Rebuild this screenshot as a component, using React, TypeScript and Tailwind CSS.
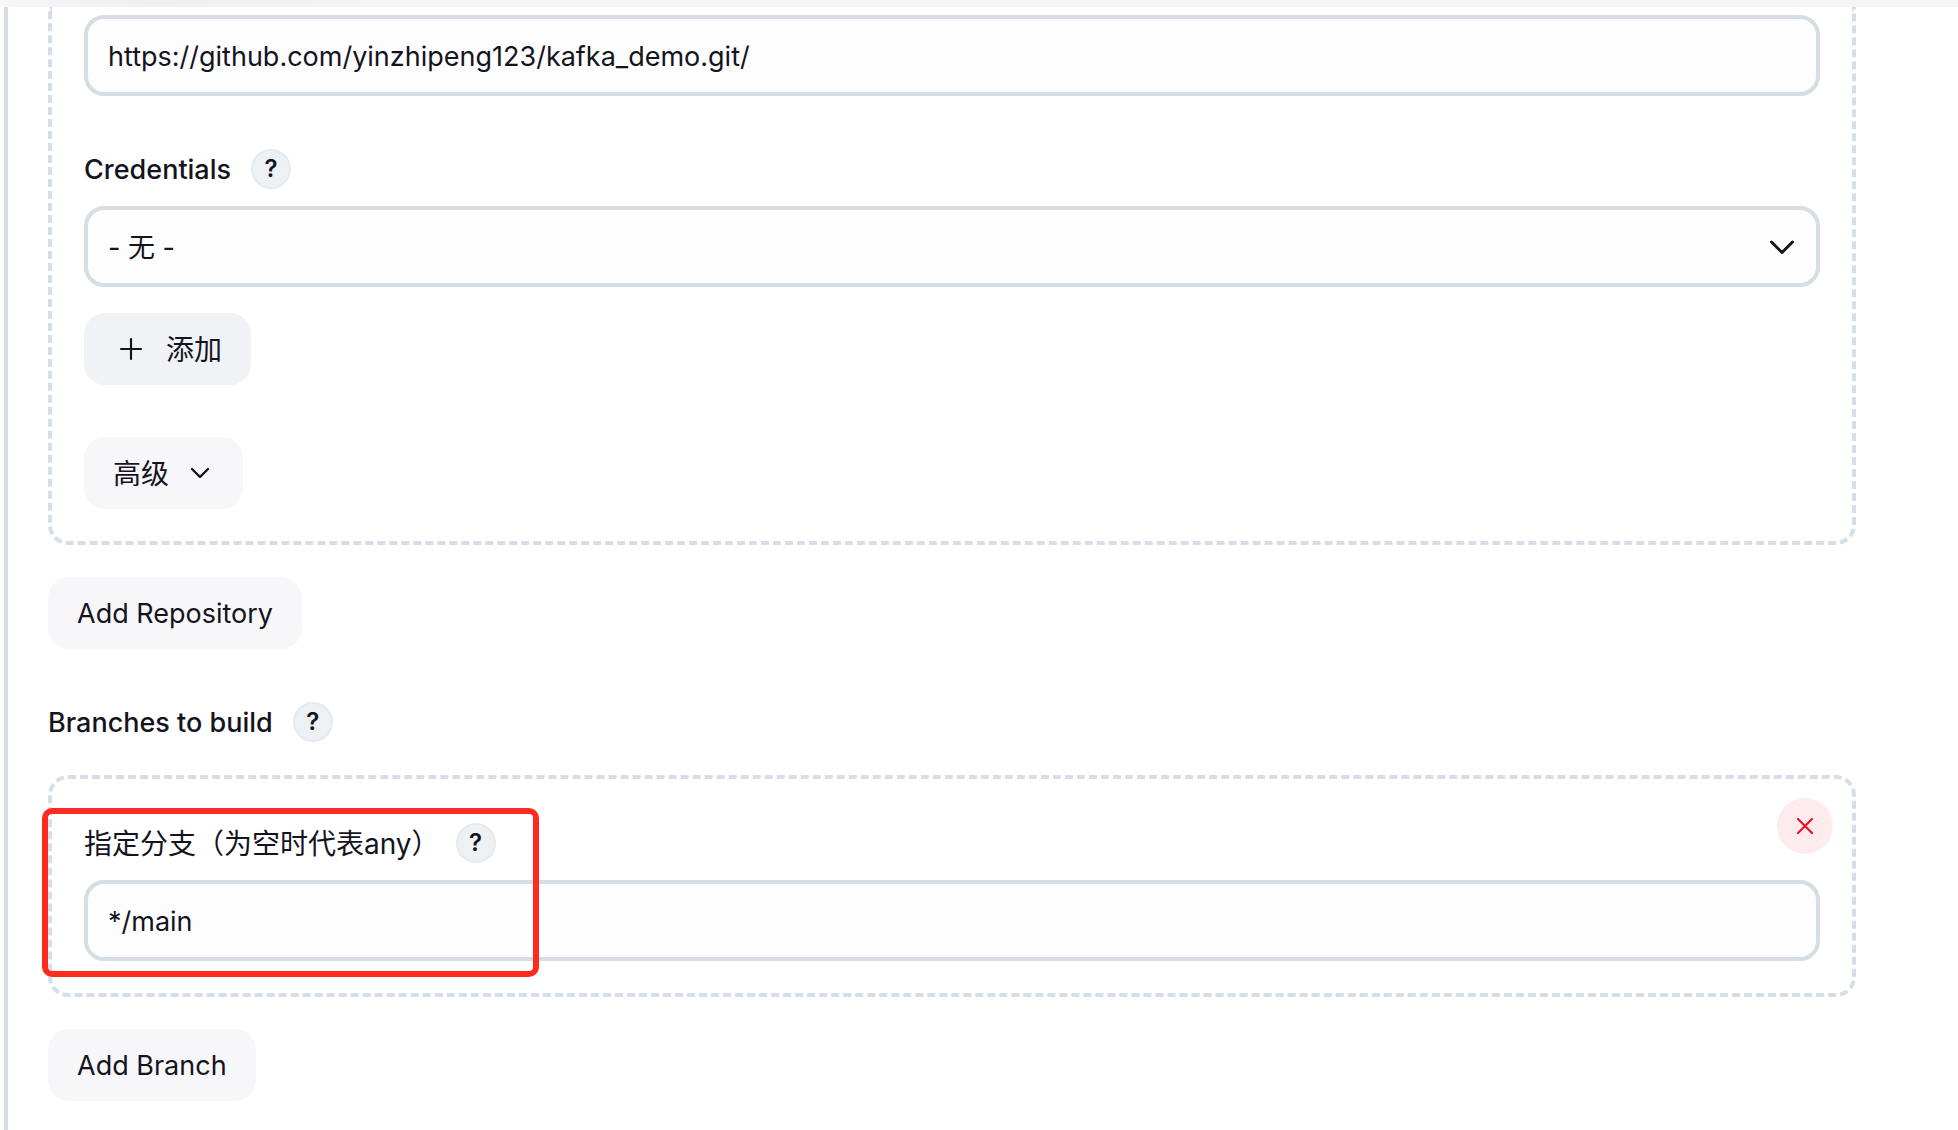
import React, { useState } from 'react';

const buttonBase =
  'flex h-[72px] items-center rounded-[21px] px-[29px] pt-0.5 transition-colors hover:bg-[#ebecf1]';

const fieldBase =
  'block h-[81px] w-full rounded-[20px] border-4 border-[#d6dde5] bg-[#fdfdfd] px-5 pt-0.5 outline-none focus:border-[#9fb4cc]';

const labelBase = 'pt-0.5 leading-[38px]';

function HelpButton({ topic }: { topic: string }) {
  return (
    <button
      type="button"
      aria-label={`Help for ${topic}`}
      className="flex h-10 w-10 items-center justify-center rounded-full border-2 border-[#e6ebf0] bg-[#edf1f4] text-[24px] leading-none font-semibold"
    >
      ?
    </button>
  );
}

export default function App() {
  const [url, setUrl] = useState('https://github.com/yinzhipeng123/kafka_demo.git/');
  const [credentials, setCredentials] = useState('none');
  const [branch, setBranch] = useState('*/main');

  return (
    <div className="flex min-h-screen flex-col bg-white font-[Inter,'Noto_Sans_CJK_SC',sans-serif] text-[27px] leading-10 text-[#14141f]">
      <header className="h-[7px] bg-linear-to-r from-[#f7f7fa] via-[#efeff2] via-8% to-[#f5f5f8] to-20%" />

      <main className="ml-1 flex-1 border-l-4 border-[#d6dde5] pr-[102px] pb-7 pl-10">
        <section className="rounded-b-[20px] border-4 border-t-0 border-dashed border-[#d6dfe7] px-8 pt-2 pb-8">
          <input
            type="text"
            aria-label="Repository URL"
            value={url}
            onChange={(e) => setUrl(e.target.value)}
            className={fieldBase}
          />

          <div className="mt-[53px] flex items-center gap-5">
            <label htmlFor="credentials" className={`${labelBase} font-[450]`}>Credentials</label>
            <HelpButton topic="Credentials" />
          </div>
          <div className="relative mt-[17px]">
            <select
              id="credentials"
              value={credentials}
              onChange={(e) => setCredentials(e.target.value)}
              className={`${fieldBase} appearance-none`}
            >
              <option value="none">- 无 -</option>
            </select>
            <svg
              className="pointer-events-none absolute top-1/2 right-[22px] h-8 w-8 -translate-y-1/2"
              viewBox="0 0 32 32"
              fill="none"
              stroke="currentColor"
              strokeWidth="3"
              strokeLinecap="round"
              strokeLinejoin="round"
              aria-hidden="true"
            >
              <path d="M5.5 11L16 21.5 26.5 11" />
            </svg>
          </div>

          <button type="button" className={`${buttonBase} mt-[26px] gap-[17px] bg-[#f1f2f6] text-[28px]`}>
            <svg className="h-9 w-9" viewBox="0 0 36 36" stroke="currentColor" strokeWidth="2.2" strokeLinecap="round" aria-hidden="true">
              <path d="M18 7v20M8 17h20" />
            </svg>
            添加
          </button>

          <button type="button" className={`${buttonBase} mt-[52px] gap-[17px] bg-[#f7f7f9] text-[28px]`}>
            高级
            <svg
              className="h-7 w-7"
              viewBox="0 0 28 28"
              fill="none"
              stroke="currentColor"
              strokeWidth="2.4"
              strokeLinecap="round"
              strokeLinejoin="round"
              aria-hidden="true"
            >
              <path d="M6 9l8 8 8-8" />
            </svg>
          </button>
        </section>

        <button type="button" className={`${buttonBase} mt-8 bg-[#f7f7f9]`}>
          Add Repository
        </button>

        <div className="mt-[53px] flex items-center gap-5">
          <h2 className={`${labelBase} font-[450]`}>Branches to build</h2>
          <HelpButton topic="Branches to build" />
        </div>

        <section className="relative mt-[33px] rounded-[20px] border-4 border-dashed border-[#d6dfe7] px-8 pt-11 pb-8">
          <button
            type="button"
            aria-label="Delete branch"
            className="absolute top-[19px] right-[19px] flex h-14 w-14 items-center justify-center rounded-full bg-[#fdebed] text-[#e6142f]"
          >
            <svg className="h-6 w-6" viewBox="0 0 24 24" stroke="currentColor" strokeWidth="2.2" strokeLinecap="round" aria-hidden="true">
              <path d="M5 5l14 14M19 5L5 19" />
            </svg>
          </button>

          <div className="flex items-center gap-4">
            <label htmlFor="branch" className={`${labelBase} text-[28px]`}>
              指定分支（为空时代表any）
            </label>
            <HelpButton topic="指定分支" />
          </div>
          <input
            id="branch"
            type="text"
            value={branch}
            onChange={(e) => setBranch(e.target.value)}
            className={`${fieldBase} mt-[17px]`}
          />

          {/* highlight frame over the branch field */}
          <div className="pointer-events-none absolute top-[29px] left-[-10px] h-[169px] w-[497px] rounded-[10px] border-6 border-[#ff2b1e]" />
        </section>

        <button type="button" className={`${buttonBase} mt-8 bg-[#f7f7f9]`}>
          Add Branch
        </button>
      </main>
    </div>
  );
}
